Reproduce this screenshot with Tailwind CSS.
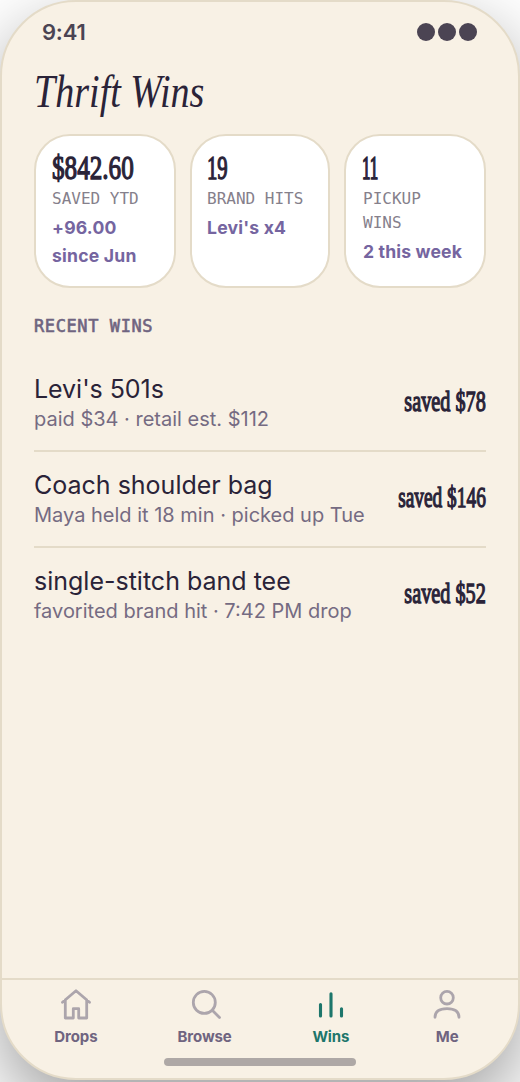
<!DOCTYPE html>
<html lang="en">
<head>
<meta charset="utf-8">
<title>Thrift Wins</title>
<script src="https://cdn.jsdelivr.net/npm/@tailwindcss/browser@4"></script>
</head>
<body class="bg-white h-[1082px] overflow-hidden font-['Inter',sans-serif]">
<div class="w-[520px] h-[1080px] flex flex-col rounded-[76px] border-2 border-[#e4dbc8] bg-[#f8f1e5] text-[#2a2338] shadow-[0_28px_72px_rgba(0,0,0,0.38)] overflow-hidden">
  <header class="flex items-center justify-between h-[60px] pl-10 pr-[41px] text-[#4b4453]">
    <span class="text-[22px] font-semibold tracking-[-0.2px]">9:41</span>
    <span class="flex gap-[3px]"><i class="size-[18px] rounded-full bg-[#4b4453]"></i><i class="size-[18px] rounded-full bg-[#4b4453]"></i><i class="size-[18px] rounded-full bg-[#4b4453]"></i></span>
  </header>
  <main class="flex-1 px-8">
    <h1 class="h-[72px] pt-1 text-[46px] leading-[52px] italic font-['Liberation_Serif',serif] whitespace-nowrap origin-left scale-x-[0.828]">Thrift Wins</h1>
    <section class="grid grid-cols-[142px_140px_142px] gap-[14px] h-[154px]">
      <div class="rounded-[36px] border-2 border-[#e4dbc8] bg-white p-4">
        <div class="h-[35px] text-[34px] leading-[32px] [-webkit-text-stroke:1.3px] font-['Liberation_Serif',serif] origin-left scale-x-[0.74]">$842.60</div>
        <div class="text-[16px] leading-6 font-['DejaVu_Sans_Mono',monospace] text-[#85808b]">SAVED YTD</div>
        <div class="mt-[3px] text-[17.6px] leading-7 font-bold tracking-[0.2px] text-[#7565a0]">+96.00<br>since Jun</div>
      </div>
      <div class="rounded-[36px] border-2 border-[#e4dbc8] bg-white py-4 pl-[15px]">
        <div class="h-[35px] text-[34px] leading-[32px] [-webkit-text-stroke:1.4px] font-['Liberation_Serif',serif] origin-left scale-x-[0.61]">19</div>
        <div class="text-[16px] leading-6 font-['DejaVu_Sans_Mono',monospace] text-[#85808b]">BRAND HITS</div>
        <div class="mt-[3px] text-[17.6px] leading-7 font-bold tracking-[0.2px] text-[#7565a0]">Levi's x4</div>
      </div>
      <div class="rounded-[36px] border-2 border-[#e4dbc8] bg-white p-4 pl-[17px]">
        <div class="h-[35px] text-[34px] leading-[32px] [-webkit-text-stroke:1.7px] font-['Liberation_Serif',serif] -indent-0.5 origin-left scale-x-[0.5]">11</div>
        <div class="text-[16px] leading-6 font-['DejaVu_Sans_Mono',monospace] text-[#85808b]">PICKUP WINS</div>
        <div class="mt-[3px] text-[17.6px] leading-7 font-bold tracking-[0.15px] text-[#7565a0] whitespace-nowrap">2 this week</div>
      </div>
    </section>
    <h2 class="mt-[26px] h-[42px] text-[18px] leading-6 font-bold text-[#6f6480]"><span class="inline-block font-['DejaVu_Sans_Mono',monospace] text-[17px] tracking-[0.6px] [-webkit-text-stroke:0.6px] font-normal">RECENT WINS</span></h2>
    <ul>
      <li class="flex items-center justify-between h-24 border-b-2 border-[#e4dbc8]">
        <div><p class="text-[25px] leading-[32px] tracking-[-0.05px]">Levi's 501s</p><p class="text-[20px] leading-7 text-[#756b82]">paid $34 · retail est. $112</p></div>
        <span class="pb-1 text-[30px] leading-8 [-webkit-text-stroke:1.3px] font-['Liberation_Serif',serif] whitespace-nowrap origin-right scale-x-[0.675]">saved $78</span>
      </li>
      <li class="flex items-center justify-between h-24 border-b-2 border-[#e4dbc8]">
        <div class="whitespace-nowrap w-[330px]"><p class="text-[25px] leading-[32px]">Coach shoulder bag</p><p class="text-[20px] leading-7 text-[#756b82]">Maya held it 18 min · picked up Tue</p></div>
        <div class="flex w-[120px] justify-end"><span class="pb-1 text-[30px] leading-8 [-webkit-text-stroke:1.3px] font-['Liberation_Serif',serif] whitespace-nowrap origin-right scale-x-[0.645]">saved $146</span></div>
      </li>
      <li class="flex items-center justify-between h-24 border-b-2 border-transparent">
        <div><p class="text-[25px] leading-[32px]">single-stitch band tee</p><p class="text-[20px] leading-7 text-[#756b82]">favorited brand hit · 7:42 PM drop</p></div>
        <div class="flex justify-end w-[100px]"><span class="pb-1 text-[30px] leading-8 [-webkit-text-stroke:1.3px] font-['Liberation_Serif',serif] whitespace-nowrap origin-right scale-x-[0.675]">saved $52</span></div>
      </li>
    </ul>
  </main>
  <nav class="h-[100px] border-t-2 border-[#e4dbc8] pt-2 flex flex-col text-[#6f6480]">
    <div class="flex justify-around pl-3 pr-[14px] text-[15px] leading-[18px] font-bold tracking-[-0.1px] h-[70px]">
      <div class="flex flex-col items-center gap-2 w-[43px]">
        <svg class="size-8 text-[#aca5ac]" viewBox="0 0 32 32" fill="none" stroke="currentColor" stroke-width="2.8" stroke-linecap="round" stroke-linejoin="round"><path d="M2.500 14.300 16 2.700l13.500 11.600M5.300 12v18h8v-9.300h5.400V30h8V12"/></svg>
        <span>Drops</span>
      </div>
      <div class="flex flex-col items-center gap-2 w-[53px]">
        <svg class="size-8 text-[#aca5ac]" viewBox="0 0 32 32" fill="none" stroke="currentColor" stroke-width="2.8" stroke-linecap="round"><circle cx="15.300" cy="14.400" r="11"/><path d="m23.500 22.500 7 7"/></svg>
        <span>Browse</span>
      </div>
      <div class="flex flex-col items-center gap-2 w-[38px] text-[#1d766b]">
        <svg class="size-8" viewBox="0 0 32 32" fill="none" stroke="currentColor" stroke-width="3.100" stroke-linecap="round"><path d="M5.500 16.500v11.500M16 5.800V28M26.500 20.700v7.300"/></svg>
        <span>Wins</span>
      </div>
      <div class="flex flex-col items-center gap-2 w-[33px]">
        <svg class="size-8 text-[#aca5ac]" viewBox="0 0 32 32" fill="none" stroke="currentColor" stroke-width="2.8" stroke-linecap="round"><circle cx="16" cy="9.700" r="6.300"/><path d="M4 29.300c0-6 5-8.700 12-8.700s12 2.700 12 8.700"/></svg>
        <span>Me</span>
      </div>
    </div>
    <div class="w-48 h-2 shrink-0 rounded-full bg-[#aea8a6] self-center"></div>
  </nav>
</div>
</body>
</html>
